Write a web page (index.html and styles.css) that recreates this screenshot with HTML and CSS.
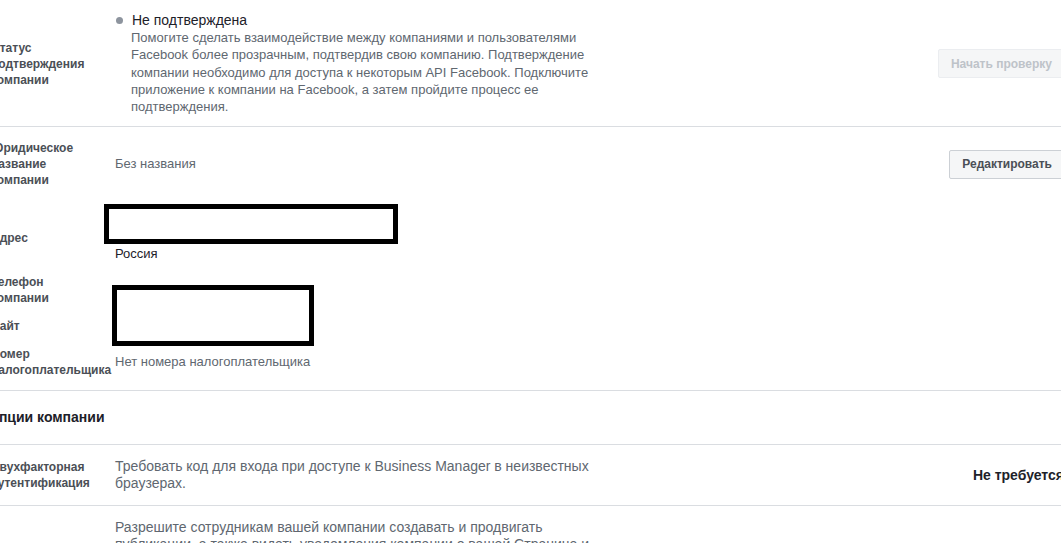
FILE: index.html
```html
<!DOCTYPE html>
<html lang="ru">

<head>
    <meta charset="UTF-8">
    <meta name="viewport" content="width=device-width, initial-scale=1.0">
    <title>Информация о компании</title>
    <link rel="stylesheet" href="styles.css">
</head>

<body>
    <div class="page">
        <section class="row row-status">
            <div class="label">Статус подтверждения компании</div>
            <div class="value">
                <div class="status"><span class="dot"></span>Не подтверждена</div>
                <p class="desc">Помогите сделать взаимодействие между компаниями и пользователями Facebook более прозрачным, подтвердив свою компанию. Подтверждение компании необходимо для доступа к некоторым API Facebook. Подключите приложение к компании на Facebook, а затем пройдите процесс ее подтверждения.</p>
            </div>
            <div class="action"><button class="btn" disabled>Начать проверку</button></div>
        </section>

        <section class="info">
            <div class="info-row info-legal">
                <div class="label">Юридическое название компании</div>
                <div class="value muted">Без названия</div>
                <div class="action"><button class="btn">Редактировать</button></div>
            </div>
            <div class="info-row">
                <div class="label">Адрес</div>
                <div class="value">
                    <div class="hidden-lines"></div>
                    <div class="dark">Россия</div>
                </div>
            </div>
            <div class="info-row">
                <div class="label">Телефон компании</div>
                <div class="value"></div>
            </div>
            <div class="info-row">
                <div class="label">Сайт</div>
                <div class="value"></div>
            </div>
            <div class="info-row">
                <div class="label">Номер налогоплательщика</div>
                <div class="value muted">Нет номера налогоплательщика</div>
            </div>

            <div class="redact redact-address"></div>
            <div class="redact redact-contacts"></div>
        </section>

        <h2 class="heading">Опции компании</h2>

        <section class="row row-option">
            <div class="label">Двухфакторная аутентификация</div>
            <div class="value text">Требовать код для входа при доступе к Business Manager в неизвестных браузерах.</div>
            <div class="action state">Не требуется</div>
        </section>

        <section class="row row-option">
            <div class="label">Публикации сотрудников</div>
            <div class="value text">Разрешите сотрудникам вашей компании создавать и продвигать публикации, а также видеть уведомления компании о вашей Странице и управлять ими в приложении Pages Manager. Сотрудники смогут публиковать материалы от имени Страницы и отвечать на комментарии, но не смогут менять настройки Страницы или добавлять новых людей.</div>
            <div class="action state">Отключено</div>
        </section>
    </div>
</body>

</html>
```

FILE: styles.css
```css
body {
    margin: 0;
    padding: 0;
    overflow: hidden;
    background: #fff;
    font-family: "Liberation Sans", Arial, sans-serif;
    color: #1d2129;
}

.page {
    margin-left: -9px;
    width: 1074px;
}

.row,
.info-row {
    display: grid;
    grid-template-columns: 124px 1fr auto;
    align-items: center;
}

.row {
    border-bottom: 1px solid #dadde1;
}

.label {
    max-width: 108px;
    font-size: 12px;
    font-weight: bold;
    line-height: 16px;
    color: #4b4f56;
}

.value {
    font-size: 13px;
    line-height: 16px;
}

.muted {
    color: #606770;
}

.dark {
    color: #1d2129;
}

/* status row */

.row-status {
    padding: 12px 0 11px;
}

.status {
    display: flex;
    align-items: center;
    font-size: 14px;
    line-height: 17px;
    color: #1d2129;
}

.dot {
    width: 7px;
    height: 7px;
    border-radius: 50%;
    background: #8d949e;
    margin: 0 9px 1px 1px;
}

.desc {
    margin: 0 0 0 16px;
    max-width: 464px;
    font-size: 13px;
    line-height: 17.3px;
    color: #606770;
}

.btn {
    height: 29px;
    padding: 0 12px;
    border: 1px solid #ccd0d5;
    border-radius: 2px;
    background: #f5f6f7;
    color: #4b4f56;
    font-family: inherit;
    font-size: 12px;
    font-weight: bold;
}

.btn:disabled {
    border-color: #ebedf0;
    color: #bec3c9;
}

/* company info */

.info {
    position: relative;
    display: flex;
    flex-direction: column;
    gap: 12px;
    padding: 13px 0 12px;
    border-bottom: 1px solid #dadde1;
}

.info-legal {
    margin-bottom: 14px;
}

.hidden-lines {
    height: 32px;
}

.redact {
    position: absolute;
    border: 5px solid #000;
    background: #fff;
}

.redact-address {
    top: 77px;
    left: 113px;
    width: 284px;
    height: 30px;
}

.redact-contacts {
    top: 158px;
    left: 121px;
    width: 192px;
    height: 51px;
}

/* options */

.heading {
    margin: 0;
    padding: 18px 0 18px 0;
    text-indent: -3px;
    font-size: 14px;
    line-height: 17px;
    font-weight: bold;
    color: #1d2129;
    border-bottom: 1px solid #dadde1;
}

.row-option {
    padding: 13px 0;
}

.text {
    max-width: 480px;
    font-size: 14px;
    line-height: 17px;
    color: #606770;
}

.state {
    margin-right: 1px;
    font-size: 14px;
    font-weight: bold;
    color: #1d2129;
}
```
